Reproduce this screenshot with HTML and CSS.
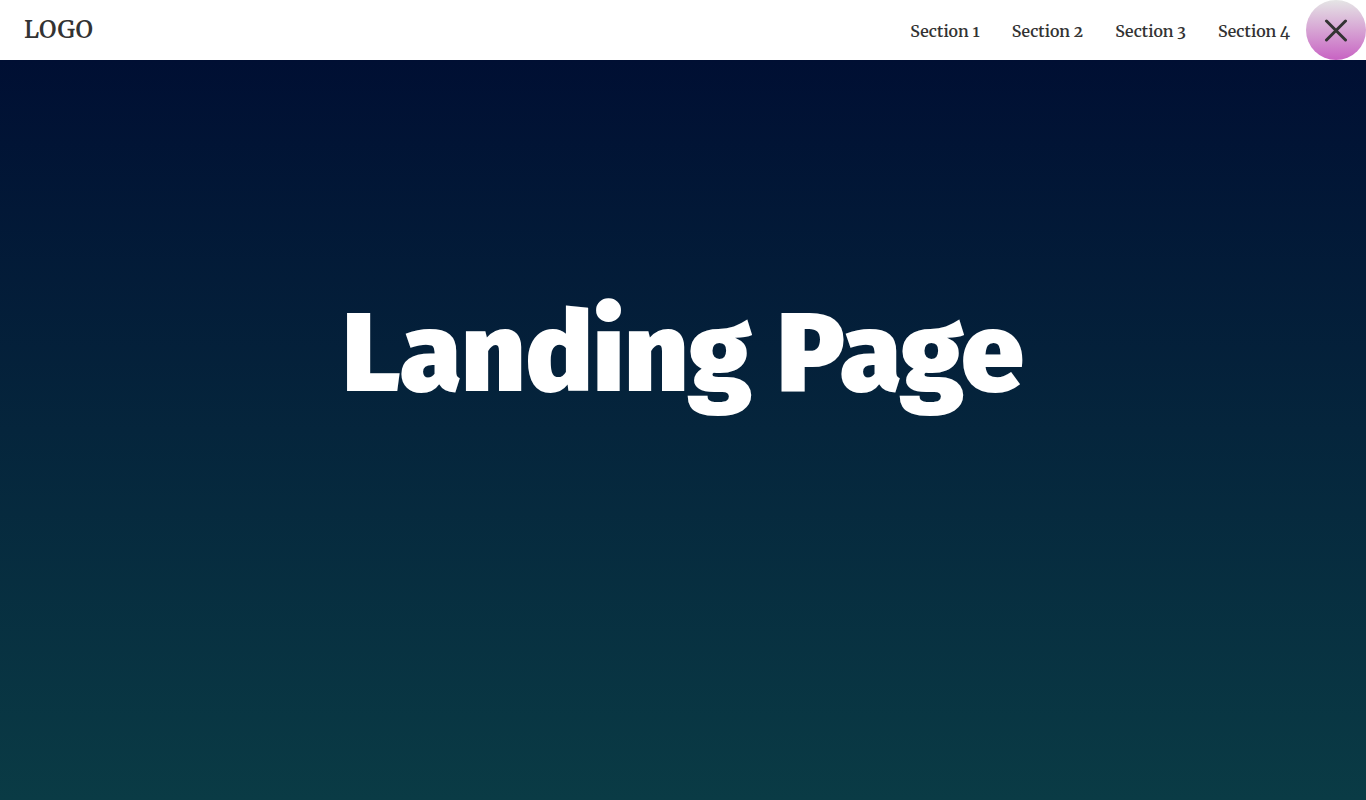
FILE: index.html
```html
<!DOCTYPE html>
<html lang="en">
<head>
<meta charset="utf-8">
<meta name="viewport" content="width=device-width, initial-scale=1">
<title>Landing Page</title>
<link rel="stylesheet" href="styles.css">
</head>
<body>
<header class="navbar">
  <a class="logo" href="#">LOGO</a>
  <nav class="menu">
    <a class="menu-link" href="#section1">Section 1</a>
    <a class="menu-link" href="#section2">Section 2</a>
    <a class="menu-link" href="#section3">Section 3</a>
    <a class="menu-link" href="#section4">Section 4</a>
  </nav>
  <button class="close" type="button" aria-label="Close menu">
    <svg class="close-icon" viewBox="0 0 24 24" aria-hidden="true"><path d="M2.5 3L21.5 22M21.5 3L2.5 22"/></svg>
  </button>
</header>
<main class="hero">
  <h1 class="hero-title">Landing Page</h1>
</main>
</body>
</html>
```
FILE: styles.css
```css
* {
  box-sizing: border-box;
}

body {
  margin: 0;
  min-height: 100vh;
  display: flex;
  flex-direction: column;
  color: #333;
  font-family: Merriweather, "Liberation Serif", serif;
  font-weight: 650;
}

.navbar {
  display: flex;
  align-items: center;
  height: 60px;
  background: #fff;
}

.logo {
  margin-right: auto;
  padding-left: 24px;
  color: inherit;
  font-size: 24px;
  line-height: 60px;
  text-decoration: none;
}

.menu {
  display: flex;
  gap: 32px;
  padding: 2px 16px 0;
}

.menu-link {
  color: inherit;
  font-size: 16px;
  line-height: 60px;
  text-decoration: none;
  font-variant-numeric: oldstyle-nums;
}

.close {
  display: grid;
  place-items: center;
  width: 60px;
  height: 60px;
  padding: 0;
  border: 0;
  border-radius: 50%;
  background: linear-gradient(#e5e5e5, #c863c3);
  color: #333;
}

.close-icon {
  width: 24px;
  height: 24px;
  fill: none;
  stroke: currentColor;
  stroke-width: 3;
  stroke-linecap: round;
}

.hero {
  flex: 1;
  display: grid;
  place-items: center;
  padding-bottom: 152px;
  background: linear-gradient(#000f33, #0a3b45);
}

.hero-title {
  margin: 0;
  color: #fff;
  font-family: "Fira Sans", "Open Sans", sans-serif;
  font-size: 112px;
  font-weight: 900;
  line-height: 1;
}
```
